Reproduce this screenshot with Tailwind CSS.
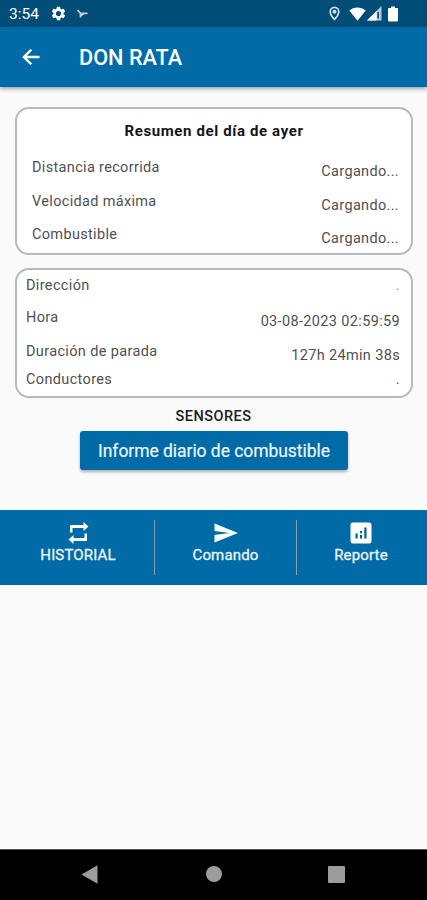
<!DOCTYPE html>
<html lang="es">
<head>
<meta charset="utf-8">
<meta name="viewport" content="width=device-width">
<title>DON RATA</title>
<script src="https://cdn.jsdelivr.net/npm/@tailwindcss/browser@4"></script>
</head>
<body class="bg-[#fafafa] font-[Roboto,sans-serif]">
<div class="flex h-[900px] w-[427px] flex-col overflow-hidden bg-[#fafafa] text-[#505050]">
  <div class="flex h-[27px] shrink-0 items-center bg-[#004d78] pl-[9px] pr-[29px] text-white">
    <span class="w-[41px] text-[15.5px] leading-[27px] pt-[2px]">3:54</span>
    <svg class="size-[17px]" viewBox="0 0 24 24" fill="currentColor"><path d="M19.14 12.94c.04-.3.06-.61.06-.94s-.02-.64-.07-.94l2.03-1.58a.5.5 0 0 0 .12-.61l-1.92-3.32a.49.49 0 0 0-.59-.22l-2.39.96c-.5-.38-1.03-.7-1.62-.94l-.36-2.54a.48.48 0 0 0-.48-.41h-3.84a.47.47 0 0 0-.47.41l-.36 2.54c-.59.24-1.13.57-1.62.94l-2.39-.96a.48.48 0 0 0-.59.22L2.74 8.87a.47.47 0 0 0 .12.61l2.03 1.58a6.5 6.5 0 0 0 0 1.88l-2.03 1.58a.5.5 0 0 0-.12.61l1.92 3.32c.12.22.37.29.59.22l2.39-.96c.5.38 1.03.7 1.62.94l.36 2.54c.05.24.24.41.48.41h3.84c.24 0 .44-.17.47-.41l.36-2.54c.59-.24 1.13-.56 1.62-.94l2.39.96c.22.08.47 0 .59-.22l1.92-3.32a.47.47 0 0 0-.12-.61zM12 15.6a3.6 3.6 0 1 1 0-7.2 3.6 3.6 0 0 1 0 7.2z"/></svg>
    <svg class="ml-[9px] h-[11px] w-[12px]" viewBox="0 0 12 11" fill="none" stroke="#bcd0dc" stroke-width="1.700"><path d="M1.500 2l3 3.300h7M4.500 5v4.500M4.500 8L8 5.300"/></svg>
    <div class="ml-auto flex items-center">
      <svg class="mr-[9px] h-[15px] w-[11px]" viewBox="0 0 11 15" fill="none" stroke="#d5e2ea" stroke-width="1.700"><path d="M5.500 13.300C3.300 11 1.200 8.300 1.200 5.700a4.300 4.300 0 0 1 8.600 0c0 2.600-2.100 5.300-4.300 7.600z"/><circle cx="5.500" cy="5.800" r="1.200"/></svg>
      <svg class="h-[14px] w-[17px]" viewBox="0 0 17 14" fill="currentColor"><path d="M.3 3.500C5-.5 12-.5 16.700 3.500L8.500 13.800z"/></svg>
      <svg class="ml-px h-[15px] w-[15px]" viewBox="0 0 15 15"><path d="M0 14.500L14.500 0v14.500z" fill="#b8ccd8"/><path d="M0 14.500L9.500 5v9.500z" fill="#fff"/><path d="M10.300 6h1.700v6.500h-1.700z" fill="#174f72"/></svg>
      <svg class="ml-[6px] h-[16px] w-[10px]" viewBox="0 0 10 16" fill="currentColor"><path d="M3 .5h4V2h2q1 0 1 1v11.500q0 1-1 1H1q-1 0-1-1V3q0-1 1-1h2z"/></svg>
    </div>
  </div>
  <header class="z-10 flex h-[60px] shrink-0 items-center bg-[#006ba6] pl-[19px] text-white shadow-[0_2px_4px_rgba(0,0,0,0.35)]">
    <svg class="size-6" viewBox="0 0 24 24" fill="currentColor"><path d="M20.500 10.700H7.800l5.300-5.200L11.500 3.800 3.200 12l8.300 8.200 1.600-1.700-5.300-5.200h12.700z"/></svg>
    <h1 class="ml-[36px] pt-[3px] text-[21.700px] font-medium">DON RATA</h1>
  </header>

  <section class="mx-[15px] mt-[20px] h-[148px] w-[398px] shrink-0 rounded-[14px] border-2 border-[#b9b9b9] bg-white pl-[15px] pr-[12px] text-[14.500px] tracking-[0.330px]">
    <h2 class="mt-[12px] h-[20px] -ml-[3px] text-center text-[15px] font-bold leading-[20px] tracking-[0.620px] text-[#151515]">Resumen del día de ayer</h2>
    <div class="mt-[17px] flex h-[33.500px] justify-between leading-[20px]"><span>Distancia recorrida</span><span class="pt-[4px]">Cargando...</span></div>
    <div class="flex h-[33.500px] justify-between leading-[20px]"><span>Velocidad máxima</span><span class="pt-[4px]">Cargando...</span></div>
    <div class="flex h-[26px] justify-between leading-[20px]"><span>Combustible</span><span class="pt-[4px]">Cargando...</span></div>
  </section>

  <section class="mx-[15px] mt-[13px] h-[130px] w-[398px] shrink-0 rounded-[14px] border-2 border-[#b9b9b9] bg-white pl-[9px] pr-[11px] pt-[6px] text-[14.500px] leading-[20px] tracking-[0.350px]">
    <div class="flex h-[32px] justify-between"><span>Dirección</span><span class="text-[#9a9aa8]">.</span></div>
    <div class="flex h-[34px] justify-between"><span>Hora</span><span class="pt-[4px]">03-08-2023 02:59:59</span></div>
    <div class="flex h-[28px] justify-between"><span>Duración de parada</span><span class="pt-[4px]">127h 24min 38s</span></div>
    <div class="flex h-[20px] justify-between"><span>Conductores</span><span>.</span></div>
  </section>

  <h2 class="mt-[9px] h-[20px] shrink-0 text-center text-[14.500px] font-medium leading-[20px] tracking-[0.470px] text-[#202020]">SENSORES</h2>
  <button class="ml-[80px] mt-[4px] h-[39px] w-[268px] shrink-0 rounded-[3px] bg-[#006ba6] pt-[2px] text-[17.500px] tracking-[-0.050px] text-[#edf5fa] shadow-[0_2px_3px_rgba(0,0,0,0.3)] [-webkit-text-stroke:0.200px_#edf5fa]">Informe diario de combustible</button>

  <nav class="mt-[40px] flex h-[75px] shrink-0 items-center bg-[#006ba6] text-[15px] leading-[18px] text-[#edf5fa]">
    <div class="flex w-[154px] flex-col items-center pb-[10px] pl-[2px]">
      <svg class="mb-px size-6 text-white" viewBox="0 0 24 24" fill="currentColor"><path d="M4 4h13.500V1L22.500 5.500l-5 4.500V7H6.500v4.500H4zM21 20H7.500v3l-5-4.500 5-4.500v3h11v-4.500H21z"/></svg>
      <span class="tracking-[0.150px] [-webkit-text-stroke:0.300px_#edf5fa]">HISTORIAL</span>
    </div>
    <i class="h-[55px] w-px bg-[#8b9eae]"></i>
    <div class="flex w-[141px] flex-col items-center pb-[10px]">
      <svg class="mb-px size-6 text-white" viewBox="0 0 24 24" fill="currentColor"><path d="M.5 2.500L24 12 .5 21.500V14l15-2-15-2z"/></svg>
      <span class="tracking-[0.150px] [-webkit-text-stroke:0.300px_#edf5fa]">Comando</span>
    </div>
    <i class="h-[55px] w-px bg-[#8b9eae]"></i>
    <div class="flex flex-1 flex-col items-center pb-[10px] pr-[2px]">
      <svg class="mb-px size-6" viewBox="0 0 24 24"><rect x="1.500" y="1.500" width="21" height="21" rx="2.500" fill="#fff"/><path d="M6.500 12.500h2.200v5H6.500zM10.900 10h2.200v2.200h-2.200zM10.900 14h2.200v3.500h-2.200zM15.300 6.500h2.200v11h-2.200z" fill="#075f91"/></svg>
      <span class="tracking-[0.150px] [-webkit-text-stroke:0.300px_#edf5fa]">Reporte</span>
    </div>
  </nav>

  <footer class="mt-auto flex h-[51px] shrink-0 items-center border-t border-[#555] bg-black pl-[81px]">
    <svg class="h-[20px] w-[17px]" viewBox="0 0 17 20" fill="#9c9c9c"><path d="M.5 9.500L16.500.3v18.400z"/></svg>
    <i class="mb-[2px] ml-[108px] size-[16px] rounded-full bg-[#9c9c9c]"></i>
    <i class="mb-[2px] ml-[106px] size-[17px] rounded-[1px] bg-[#9c9c9c]"></i>
  </footer>
</div>
</body>
</html>
